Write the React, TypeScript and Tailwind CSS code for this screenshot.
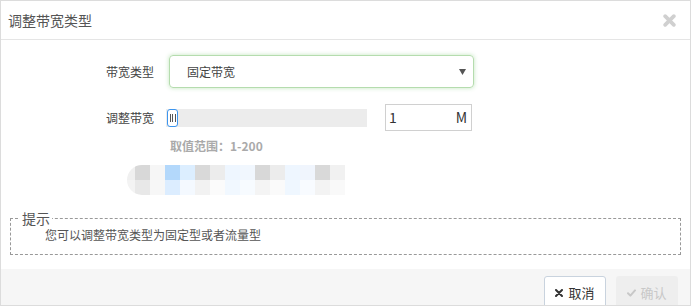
import React from 'react';

const font = { fontFamily: '"Noto Sans CJK SC", "Noto Sans", sans-serif' };

const mosaicTop = ['#d8d8d8', '#f6f6f6', '#b3d8fb', '#dceeff', '#d9d9d9', '#ececec', '#eef6ff', '#f1f7fe', '#d8d8d8', '#ececec', '#eef6ff', '#f0f5fd', '#d9d9d9', '#f1f1f1'];
const mosaicBottom = ['#e8e8e8', '#f7f7f7', '#dcedff', '#f4f9ff', '#f2f2f2', '#fbfbfb', '#f1f8ff', '#f7fbff', '#f4f4f4', '#fafafa', '#eff7ff', '#f8fbff', '#f3f3f3', '#f9f9f9'];

function Mosaic() {
  return (
    <div className="flex w-[218px] h-[30px] rounded-l-[15px] overflow-hidden">
      <div className="flex flex-col w-[8px]">
        <div className="h-[15px] bg-[#f0f0f0]" />
        <div className="h-[15px] bg-[#f3f3f3]" />
      </div>
      {mosaicTop.map((c, i) => (
        <div key={i} className="flex flex-col w-[15px]">
          <div className="h-[15px]" style={{ background: c }} />
          <div className="h-[15px]" style={{ background: mosaicBottom[i] }} />
        </div>
      ))}
    </div>
  );
}

export default function App() {
  return (
    <div className="w-[691px] h-[306px] bg-white border border-[#dcdcdc] flex flex-col overflow-hidden" style={font}>
      <div className="h-[39px] shrink-0 flex items-center justify-between border-b border-[#e5e5e5] pl-[7px] pr-[14px]">
        <span className="text-[14px] text-[#555]">调整带宽类型</span>
        <svg width="13" height="13" viewBox="0 0 12 12" className="mt-[1px]">
          <path d="M2 2 L10 10 M10 2 L2 10" stroke="#d0d0d0" strokeWidth="3.4" strokeLinecap="round" />
        </svg>
      </div>

      <div className="flex-1 flex flex-col">
        <div className="flex items-center mt-[15px]">
          <div className="w-[153px] text-right text-[12px] text-[#444]">带宽类型</div>
          <div className="ml-[15px] w-[305px] h-[33px] rounded-[4px] border border-[#b5dcae] shadow-[0_0_4px_rgba(120,200,110,0.45)] flex items-center justify-between pl-[17px] pr-[7px]">
            <span className="text-[12px] text-[#444]">固定带宽</span>
            <svg width="7" height="6" viewBox="0 0 7 6">
              <path d="M0 0 H7 L3.5 6 Z" fill="#555" />
            </svg>
          </div>
        </div>

        <div className="flex items-center mt-[16px] h-[27px]">
          <div className="w-[153px] text-right text-[12px] text-[#444]">调整带宽</div>
          <div className="ml-[12px] w-[201px] h-[18px] bg-[#ececec] flex">
            <div className="ml-[1px] w-[11px] h-[18px] bg-white border border-[#3d95ee] rounded-[3px] flex items-center justify-center gap-[1.5px]">
              <div className="w-[1px] h-[8px] bg-[#555]" />
              <div className="w-[1px] h-[8px] bg-[#555]" />
              <div className="w-[1px] h-[8px] bg-[#555]" />
            </div>
          </div>
          <div className="ml-[18px] w-[87px] h-[27px] border border-[#d0d0d0] flex items-center justify-between pl-[3px] pr-[4px] text-[14px] text-[#333]">
            <span>1</span>
            <span>M</span>
          </div>
        </div>

        <div className="ml-[169px] mt-[7px] text-[12px] font-semibold text-[#aaa] leading-[16px]">取值范围：1-200</div>

        <div className="ml-[126px] mt-[11px]">
          <Mosaic />
        </div>

        <fieldset className="mx-[9px] mt-[16px] border border-dashed border-[#999] pl-[34px] h-[44px]">
          <legend className="ml-[-25px] px-[2px] text-[14px] leading-[14px] text-[#555]">提示</legend>
          <div className="text-[12px] text-[#555] leading-[16px] mt-[2px]">您可以调整带宽类型为固定型或者流量型</div>
        </fieldset>
      </div>

      <div className="h-[36px] shrink-0 bg-[#f6f6f6] flex items-start justify-end pr-[12px] pt-[7px] gap-[10px] overflow-hidden">
        <button className="w-[62px] h-[34px] shrink-0 bg-white border border-[#c9d3de] rounded-[3px] flex items-center justify-center gap-[5px] text-[13px] text-[#333]">
          <svg width="8" height="8" viewBox="0 0 8 8">
            <path d="M1 1 L7 7 M7 1 L1 7" stroke="#333" strokeWidth="2" strokeLinecap="round" />
          </svg>
          <span>取消</span>
        </button>
        <button className="w-[62px] h-[34px] shrink-0 bg-[#eeeeee] rounded-[3px] flex items-center justify-center gap-[4px] text-[13px] text-[#c8c8c8]">
          <svg width="9" height="8" viewBox="0 0 9 8">
            <path d="M1 4.2 L3.4 6.6 L8 1.4" stroke="#c8c8c8" strokeWidth="2" fill="none" strokeLinecap="round" strokeLinejoin="round" />
          </svg>
          <span>确认</span>
        </button>
      </div>
    </div>
  );
}
